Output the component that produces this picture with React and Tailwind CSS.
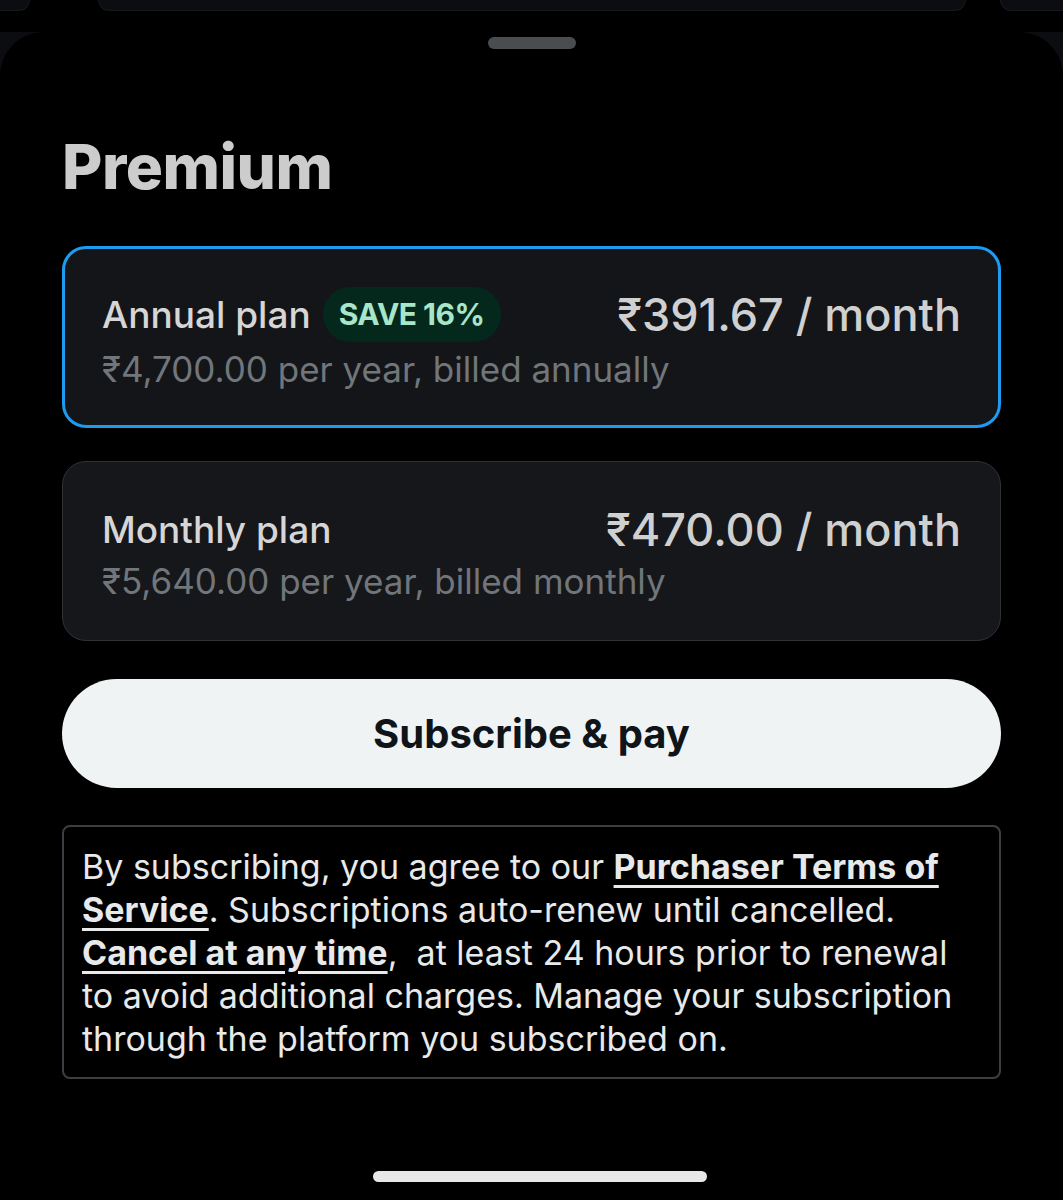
export default function App() {
  const font = { fontFamily: "Inter, 'Noto Sans', sans-serif" };

  return (
    <div className="min-h-[1200px] w-[1063px] bg-black overflow-hidden" style={font}>
      {/* background sheet peeking at top */}
      <div className="flex h-[11px] bg-black">
        <div className="w-[30px] rounded-br-[14px] bg-[#0c0d10] border-b border-r border-[#16181c]" />
        <div className="ml-[68px] w-[868px] rounded-b-[14px] bg-[#0c0d10] border-b border-x border-[#16181c]" />
        <div className="ml-[34px] flex-1 rounded-bl-[14px] bg-[#0c0d10] border-b border-l border-[#16181c]" />
      </div>
      <div className="h-[21px] bg-black" />

      <div className="bg-[#0c0d10]">
        <div className="min-h-[1168px] rounded-t-[44px] bg-black flex flex-col px-[62px]">
          <div className="flex justify-center pt-[5px]">
            <div className="h-[12px] w-[88px] rounded-full bg-[#4a4d50]" />
          </div>

          <h1 className="mt-[87px] text-[62px] font-extrabold leading-none text-[#cccccc] tracking-[-0.5px]">
            Premium
          </h1>

          <div className="mt-[48px] h-[182px] rounded-[24px] border-[3px] border-[#1d9bf0] bg-[#141518] px-[37px] pt-[40px]">
            <div className="flex h-[50px] items-center justify-between">
              <div className="flex items-center gap-[12px]">
                <span className="text-[37px] font-medium text-[#d6d6d6] leading-none">Annual plan</span>
                <span className="flex h-[55px] items-center rounded-full bg-[#05281c] px-[16px] text-[30px] font-bold text-[#a8e6c9] tracking-[-0.5px]">
                  SAVE 16%
                </span>
              </div>
              <span className="text-[45px] font-medium text-[#d0d0d0] leading-none">₹391.67 / month</span>
            </div>
            <div className="mt-[8px] text-[35px] text-[#71767b] leading-[44px]">
              ₹4,700.00 per year, billed annually
            </div>
          </div>

          <div className="mt-[33px] h-[180px] rounded-[24px] border border-[#2f3336] bg-[#16171a] px-[39px] pt-[42px]">
            <div className="flex h-[50px] items-center justify-between">
              <span className="text-[37px] font-medium text-[#d6d6d6] leading-none">Monthly plan</span>
              <span className="text-[45px] font-medium text-[#d0d0d0] leading-none">₹470.00 / month</span>
            </div>
            <div className="mt-[5px] text-[35px] text-[#71767b] leading-[44px]">
              ₹5,640.00 per year, billed monthly
            </div>
          </div>

          <button className="mt-[38px] h-[109px] rounded-full bg-[#eff3f4] text-[40px] font-bold text-[#0f1419]">
            Subscribe &amp; pay
          </button>

          <div className="mt-[37px] rounded-[8px] border-2 border-[#3b3e42] px-[18px] pt-[18px] pb-[17px] text-[34px] leading-[43px] text-[#e7e9ea]">
            By subscribing, you agree to our{" "}
            <a className="font-bold underline decoration-[3px] underline-offset-[6px]">Purchaser Terms of</a>
            <br />
            <a className="font-bold underline decoration-[3px] underline-offset-[6px]">Service</a>. Subscriptions auto-renew until cancelled.
            <br />
            <a className="font-bold underline decoration-[3px] underline-offset-[6px]">Cancel at any time</a>,&nbsp; at least 24 hours prior to renewal
            <br />
            to avoid additional charges. Manage your subscription
            <br />
            through the platform you subscribed on.
          </div>

          <div className="mt-[92px] flex">
            <div className="ml-[311px] h-[11px] w-[334px] rounded-full bg-[#e8e8e8]" />
          </div>
        </div>
      </div>
    </div>
  );
}
